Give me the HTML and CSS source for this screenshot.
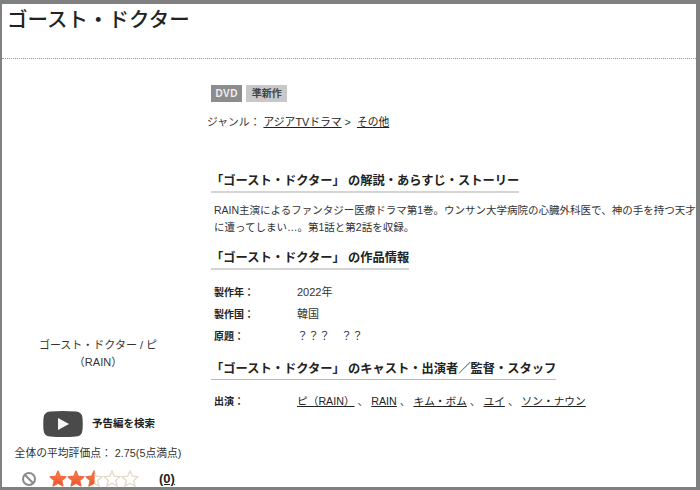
FILE: index.html

```html
<!DOCTYPE html>
<html lang="ja">
<head>
    <meta charset="UTF-8">
    <meta name="viewport" content="width=device-width, initial-scale=1.0">
    <title>ゴースト・ドクター</title>
    <link rel="stylesheet" href="styles.css">
</head>
<body>
    <svg class="defs" width="0" height="0">
        <defs>
            <linearGradient id="starFill" x1="0" y1="0" x2="0" y2="1">
                <stop offset="0" stop-color="#f98a4e"/>
                <stop offset="1" stop-color="#ee4a2a"/>
            </linearGradient>
        </defs>
    </svg>

    <div class="frame">
        <header class="page-head">
            <h1>ゴースト・ドクター</h1>
        </header>

        <div class="columns">
            <!-- Left column -->
            <aside class="side">
                <p class="jacket-title">ゴースト・ドクター / ピ<br>（RAIN）</p>

                <a class="trailer" href="#">
                    <svg class="play" width="40" height="26" viewBox="0 0 40 26">
                        <path d="M7 .5 Q20 -.5 33 .5 Q39 1 39.5 7 Q40 13 39.5 19 Q39 25 33 25.5 Q20 26.5 7 25.5 Q1 25 .5 19 Q0 13 .5 7 Q1 1 7 .5 Z" fill="#4a4a4a"/>
                        <path d="M15 7 L26 13 L15 19 Z" fill="#f6f6f6"/>
                    </svg>
                    <span class="trailer-label">予告編を検索</span>
                </a>

                <p class="average">全体の平均評価点： 2.75(5点満点)</p>

                <div class="rating">
                    <svg class="no-rate" width="16" height="16" viewBox="0 0 16 16">
                        <circle cx="8" cy="8" r="6" fill="none" stroke="#8a8a8a" stroke-width="2"/>
                        <path d="M4 4 L12 12" stroke="#8a8a8a" stroke-width="2"/>
                    </svg>
                    <span class="stars">
                        <svg width="18" height="17" viewBox="0 0 18 17"><path class="star-on" d="M9 1 L11.3 6.2 L17 6.8 L12.7 10.5 L14 16 L9 13.2 L4 16 L5.3 10.5 L1 6.8 L6.7 6.2 Z"/></svg>
                        <svg width="18" height="17" viewBox="0 0 18 17"><path class="star-on" d="M9 1 L11.3 6.2 L17 6.8 L12.7 10.5 L14 16 L9 13.2 L4 16 L5.3 10.5 L1 6.8 L6.7 6.2 Z"/></svg>
                        <svg width="18" height="17" viewBox="0 0 18 17">
                            <path class="star-off" d="M9 1 L11.3 6.2 L17 6.8 L12.7 10.5 L14 16 L9 13.2 L4 16 L5.3 10.5 L1 6.8 L6.7 6.2 Z"/>
                            <path class="star-on" d="M9 1 L9 13.2 L4 16 L5.3 10.5 L1 6.8 L6.7 6.2 Z"/>
                        </svg>
                        <svg width="18" height="17" viewBox="0 0 18 17"><path class="star-off" d="M9 1 L11.3 6.2 L17 6.8 L12.7 10.5 L14 16 L9 13.2 L4 16 L5.3 10.5 L1 6.8 L6.7 6.2 Z"/></svg>
                        <svg width="18" height="17" viewBox="0 0 18 17"><path class="star-off" d="M9 1 L11.3 6.2 L17 6.8 L12.7 10.5 L14 16 L9 13.2 L4 16 L5.3 10.5 L1 6.8 L6.7 6.2 Z"/></svg>
                    </span>
                    <a class="count" href="#">(0)</a>
                </div>
            </aside>

            <!-- Main column -->
            <main class="main">
                <div class="badges">
                    <span class="badge badge-dvd">DVD</span>
                    <span class="badge badge-new">準新作</span>
                </div>

                <p class="genre">ジャンル： <a href="#">アジアTVドラマ</a> &gt;&nbsp; <a href="#">その他</a></p>

                <h2 class="section-title first">「ゴースト・ドクター」 の解説・あらすじ・ストーリー</h2>
                <p class="story">RAIN主演によるファンタジー医療ドラマ第1巻。ウンサン大学病院の心臓外科医で、神の手を持つ天才医師が、交通事故<br>に遭ってしまい…。第1話と第2話を収録。</p>

                <h2 class="section-title">「ゴースト・ドクター」 の作品情報</h2>
                <dl class="info">
                    <dt>製作年：</dt><dd>2022年</dd>
                    <dt>製作国：</dt><dd>韓国</dd>
                    <dt>原題：</dt><dd>？？？　？？</dd>
                </dl>

                <h2 class="section-title thin">「ゴースト・ドクター」 のキャスト・出演者／監督・スタッフ</h2>
                <dl class="info cast">
                    <dt>出演：</dt>
                    <dd><a href="#">ピ（RAIN）</a> 、 <a href="#">RAIN</a> 、 <a href="#">キム・ボム</a> 、 <a href="#">ユイ</a> 、 <a href="#">ソン・ナウン</a></dd>
                </dl>
            </main>
        </div>
    </div>
</body>
</html>
```

FILE: styles.css

```css
* {
    margin: 0;
    padding: 0;
    box-sizing: border-box;
}

html, body {
    height: 100%;
    overflow: hidden;
}

body {
    font-family: "Liberation Sans", "Noto Sans CJK JP", sans-serif;
    font-size: 11px;
    color: #333;
    background-color: #fff;
}

a {
    color: #222;
}

.defs {
    display: block;
}

.frame {
    height: 490px;
    border-top: 4px solid #808080;
    border-left: 2px solid #808080;
    border-right: 4px solid #808080;
    border-bottom: 3px solid #808080;
    overflow: hidden;
}

.page-head {
    height: 55px;
    padding: 1px 0 0 5px;
    border-bottom: 1px dotted #999;
}

.page-head h1 {
    font-size: 20.5px;
    font-weight: 500;
    line-height: 30px;
    color: #222;
}

.columns {
    display: flex;
}

/* Left column */
.side {
    width: 192px;
    flex-shrink: 0;
    padding-top: 278px;
    text-align: center;
}

.jacket-title {
    line-height: 17px;
}

.trailer {
    display: flex;
    align-items: center;
    gap: 9px;
    margin: 40px 0 0 41px;
    font-size: 10.5px;
    font-weight: bold;
    color: #222;
    text-decoration: none;
}

.trailer-label {
    padding-bottom: 4px;
}

.average {
    margin-top: 8px;
    font-size: 10.8px;
    line-height: 16px;
    color: #333;
}

.rating {
    display: flex;
    align-items: center;
    margin: 9px 0 0 19px;
}

.stars {
    display: flex;
    margin-left: 12px;
}

.star-on {
    fill: url(#starFill);
    stroke: #f2683e;
    stroke-width: 1.2;
    stroke-linejoin: round;
}

.star-off {
    fill: #fff;
    stroke: #e4dac8;
    stroke-width: 1.4;
}

.count {
    margin-left: 20px;
    font-size: 13px;
    font-weight: bold;
}

/* Main column */
.main {
    flex: 1;
    min-width: 0;
    padding: 26px 0 0 13px;
    overflow: hidden;
}

.badges {
    display: flex;
    gap: 4px;
    padding-left: 4px;
}

.badge {
    font-size: 10px;
    line-height: 17px;
    padding: 0 5.5px;
    font-weight: bold;
}

.badge-dvd {
    padding: 0 4.5px;
    background-color: #8c8c8c;
    color: #eee;
    letter-spacing: .4px;
}

.badge-new {
    background-color: #c8c8c8;
    color: #444;
}

.genre {
    margin-top: 12px;
    font-size: 10.8px;
    line-height: 17px;
    color: #333;
}

.section-title {
    width: fit-content;
    margin: 0 0 0 4px;
    font-size: 12.25px;
    line-height: 20px;
    color: #222;
    border-bottom: 2px solid #d4d4d4;
    white-space: nowrap;
}

.section-title.first {
    margin-top: 40px;
}

.section-title.thin {
    border-bottom: 1px solid #bbb;
}

.story {
    margin: 9px 0 12px 7px;
    font-size: 10.5px;
    line-height: 17px;
    white-space: nowrap;
}

.info {
    display: grid;
    grid-template-columns: 83px 1fr;
    margin: 14px 0 14px 7px;
    row-gap: 5px;
    line-height: 17px;
}

.info dt {
    font-size: 10px;
    font-weight: bold;
    color: #222;
}

.cast {
    margin-top: 13px;
    font-size: 10.7px;
}
```
